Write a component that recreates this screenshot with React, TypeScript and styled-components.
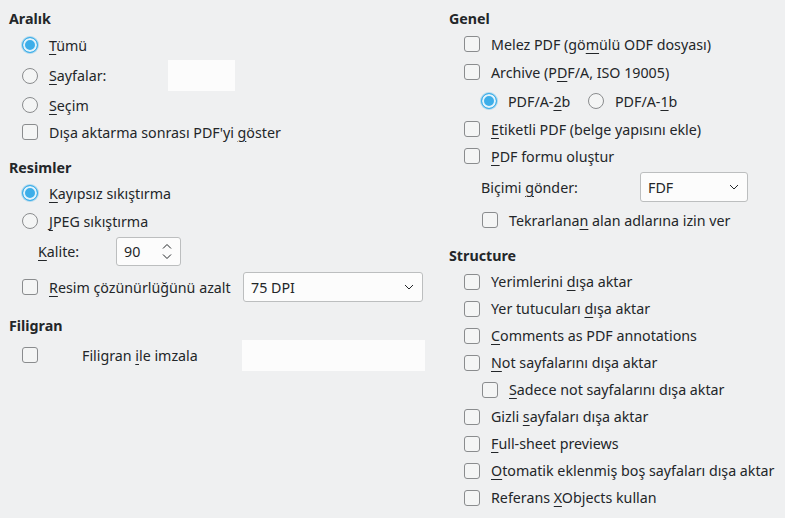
import React from "react";
import styled, { createGlobalStyle } from "styled-components";

const Global = createGlobalStyle`
  html, body { margin: 0; padding: 0; background: #eff0f1; }
  body {
    font-family: "Noto Sans", "DejaVu Sans", sans-serif;
    font-size: 14.25px;
    color: #232629;
    width: 785px;
    height: 518px;
    overflow: hidden;
  }
`;

const Page = styled.div`
  display: flex;
  width: 785px;
  height: 518px;
`;

const Column = styled.div<{ $w?: number }>`
  display: flex;
  flex-direction: column;
  width: ${(p) => (p.$w ? `${p.$w}px` : "auto")};
  flex: ${(p) => (p.$w ? "none" : "1")};
  box-sizing: border-box;
`;

const Heading = styled.div<{ $mt?: number; $h?: number }>`
  font-weight: 700;
  height: ${(p) => p.$h ?? 24}px;
  margin-top: ${(p) => p.$mt ?? 0}px;
  display: flex;
  align-items: center;
  padding-left: 9px;
`;

const Row = styled.div<{ $h: number; $indent: number }>`
  display: flex;
  align-items: center;
  height: ${(p) => p.$h}px;
  padding-left: ${(p) => p.$indent}px;
  white-space: nowrap;
`;

const Label = styled.span<{ $ml?: number; $w?: number }>`
  margin-left: ${(p) => p.$ml ?? 11}px;
  ${(p) => (p.$w ? `width: ${p.$w}px; flex: none;` : "")}
`;

const U = styled.span`
  text-decoration: underline;
  text-decoration-thickness: 1px;
  text-underline-offset: 3px;
`;

const Box = styled.span`
  width: 16px;
  height: 16px;
  box-sizing: border-box;
  border: 1px solid #8a8c8e;
  border-radius: 3px;
  background: #f4f5f5;
  flex: none;
`;

const Radio = styled.span<{ $on?: boolean }>`
  width: 16px;
  height: 16px;
  box-sizing: border-box;
  border-radius: 50%;
  flex: none;
  border: 1px solid ${(p) => (p.$on ? "#3daee9" : "#8a8c8e")};
  background: ${(p) => (p.$on ? "#3daee9" : "#f4f5f5")};
  box-shadow: ${(p) => (p.$on ? "inset 0 0 0 2px #e3f3fb, 0 0 0 1px rgba(61,174,233,0.35)" : "none")};
`;

const TextField = styled.div<{ $w: number; $h: number }>`
  width: ${(p) => p.$w}px;
  height: ${(p) => p.$h}px;
  background: #fcfcfc;
  flex: none;
`;

const Combo = styled.div<{ $w: number; $h: number }>`
  width: ${(p) => p.$w}px;
  height: ${(p) => p.$h}px;
  box-sizing: border-box;
  background: #fcfcfc;
  border: 1px solid #bcbebf;
  border-radius: 3px;
  display: flex;
  align-items: center;
  justify-content: space-between;
  padding: 0 8px 0 7px;
  flex: none;
`;

const Chevron = () => (
  <svg width="10" height="6" viewBox="0 0 10 6">
    <path d="M1 1 L5 5 L9 1" fill="none" stroke="#232629" strokeWidth="1" />
  </svg>
);

const SpinArrows = () => (
  <svg width="10" height="17" viewBox="0 0 10 17">
    <path d="M1 5.5 L5 1.5 L9 5.5" fill="none" stroke="#232629" strokeWidth="1" />
    <path d="M1 11.5 L5 15.5 L9 11.5" fill="none" stroke="#232629" strokeWidth="1" />
  </svg>
);

type CP = { h?: number; indent: number; children: React.ReactNode };

const CheckRow = ({ h = 27, indent, children }: CP) => (
  <Row $h={h} $indent={indent}>
    <Box />
    <Label>{children}</Label>
  </Row>
);

const RadioRow = ({ h = 27, indent, on, children }: CP & { on?: boolean }) => (
  <Row $h={h} $indent={indent}>
    <Radio $on={on} />
    <Label>{children}</Label>
  </Row>
);

export default function App() {
  return (
    <Page>
      <Global />
      <Column $w={440}>
        <Heading $mt={6}>Aralık</Heading>
        <RadioRow h={30} indent={22} on>
          <U>T</U>ümü
        </RadioRow>
        <Row $h={31} $indent={22}>
          <Radio />
          <Label $w={119}>
            <U>S</U>ayfalar:
          </Label>
          <TextField $w={67} $h={31} />
        </Row>
        <RadioRow h={28} indent={22}>
          <U>S</U>eçim
        </RadioRow>
        <CheckRow h={26} indent={22}>
          Dışa aktarma sonrası PDF'yi <U>g</U>öster
        </CheckRow>

        <Heading $mt={10}>Resimler</Heading>
        <RadioRow h={28} indent={22} on>
          <U>K</U>ayıpsız sıkıştırma
        </RadioRow>
        <RadioRow h={28} indent={22}>
          <U>J</U>PEG sıkıştırma
        </RadioRow>
        <Row $h={33} $indent={38}>
          <Label $ml={0} $w={78}>
            <U>K</U>alite:
          </Label>
          <Combo $w={65} $h={29}>
            <span>90</span>
            <SpinArrows />
          </Combo>
        </Row>
        <Row $h={38} $indent={22}>
          <Box />
          <Label $w={194}>
            <U>R</U>esim çözünürlüğünü azalt
          </Label>
          <Combo $w={180} $h={30}>
            <span>75 DPI</span>
            <Chevron />
          </Combo>
        </Row>

        <Heading $mt={7}>Filigran</Heading>
        <Row $h={36} $indent={22}>
          <Box />
          <Label $ml={44} $w={160}>
            Filigran <U>i</U>le imzala
          </Label>
          <TextField $w={183} $h={31} />
        </Row>
      </Column>

      <Column>
        <Heading $mt={6}>Genel</Heading>
        <CheckRow h={28} indent={24}>
          Melez PDF (gö<U>m</U>ülü ODF dosyası)
        </CheckRow>
        <CheckRow h={28} indent={24}>
          Archive (P<U>D</U>F/A, ISO 19005)
        </CheckRow>
        <Row $h={30} $indent={41}>
          <Radio $on />
          <Label $w={80}>
            PDF/A-<U>2</U>b
          </Label>
          <Radio />
          <Label>
            PDF/A-<U>1</U>b
          </Label>
        </Row>
        <CheckRow h={26} indent={24}>
          <U>E</U>tiketli PDF (belge yapısını ekle)
        </CheckRow>
        <CheckRow h={28} indent={24}>
          <U>P</U>DF formu oluştur
        </CheckRow>
        <Row $h={34} $indent={41}>
          <Label $ml={0} $w={159}>
            Biçimi <U>g</U>önder:
          </Label>
          <Combo $w={108} $h={30}>
            <span>FDF</span>
            <Chevron />
          </Combo>
        </Row>
        <CheckRow h={32} indent={42}>
          Tekrarlana<U>n</U> alan adlarına izin ver
        </CheckRow>

        <Heading $mt={7} $h={25}>Structure</Heading>
        <CheckRow indent={24}>
          Yerimlerini <U>d</U>ışa aktar
        </CheckRow>
        <CheckRow indent={24}>
          Yer tutucuları <U>d</U>ışa aktar
        </CheckRow>
        <CheckRow indent={24}>
          <U>C</U>omments as PDF annotations
        </CheckRow>
        <CheckRow indent={24}>
          <U>N</U>ot sayfalarını dışa aktar
        </CheckRow>
        <CheckRow indent={42}>
          <U>S</U>adece not sayfalarını dışa aktar
        </CheckRow>
        <CheckRow indent={24}>
          Gizli <U>s</U>ayfaları dışa aktar
        </CheckRow>
        <CheckRow indent={24}>
          <U>F</U>ull-sheet previews
        </CheckRow>
        <CheckRow indent={24}>
          <U>O</U>tomatik eklenmiş boş sayfaları dışa aktar
        </CheckRow>
        <CheckRow indent={24}>
          Referans <U>X</U>Objects kullan
        </CheckRow>
      </Column>
    </Page>
  );
}
